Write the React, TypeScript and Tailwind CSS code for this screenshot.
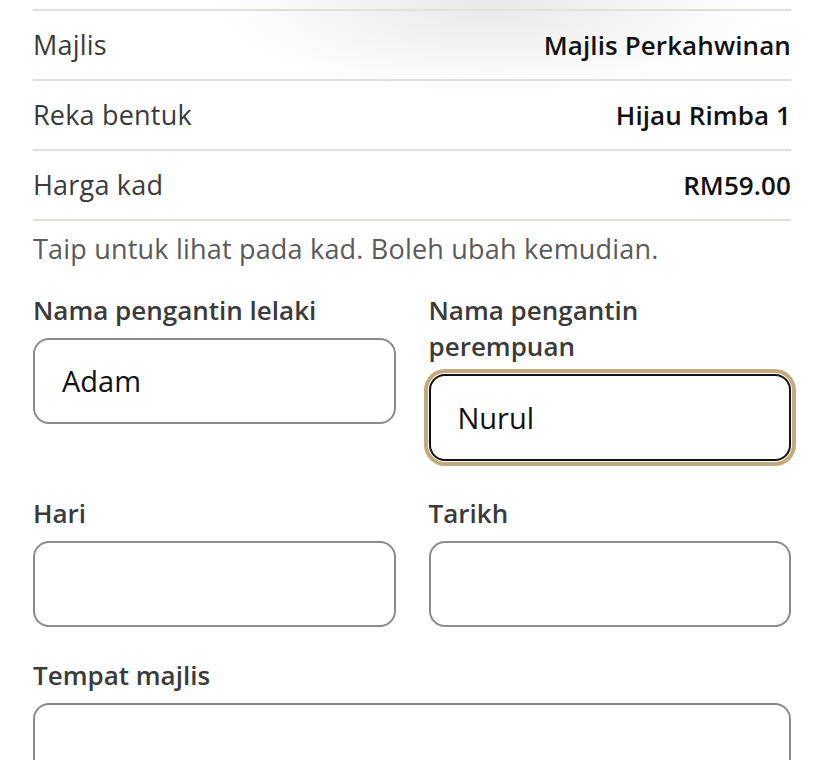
const summary = [
  { label: "Majlis", value: "Majlis Perkahwinan" },
  { label: "Reka bentuk", value: "Hijau Rimba 1" },
  { label: "Harga kad", value: "RM59.00" },
];

function Field({
  label,
  value,
  focused,
  full,
}: {
  label: string;
  value?: string;
  focused?: boolean;
  full?: boolean;
}) {
  return (
    <div className={full ? "col-span-2" : ""}>
      <p className="max-w-[330px] text-[26px] font-semibold leading-[36px] text-[#3a3a3a]">
        {label}
      </p>
      <div
        className={
          focused
            ? "mt-[10px] flex h-[87px] items-center rounded-[16px] border-2 border-[#111] px-[27px] shadow-[0_0_0_1px_#fff,0_0_0_5px_#c3aa7d]"
            : "mt-[10px] flex h-[86px] items-center rounded-[16px] border-2 border-[#8a8a8a] px-[27px]"
        }
      >
        <span className="text-[29px] text-[#111]">{value}</span>
      </div>
    </div>
  );
}

export default function App() {
  return (
    <div
      className="min-h-[760px] bg-white bg-[radial-gradient(ellipse_280px_95px_at_490px_0px,#e8e8e8,#ffffff)] px-[33px] pt-[9px]"
      style={{ fontFamily: '"Open Sans", "Noto Sans", sans-serif' }}
    >
      <div className="border-b-2 border-[#e2e0da]">
        {summary.map((row) => (
          <div
            key={row.label}
            className="flex h-[70px] items-center justify-between border-t-2 border-[#e2e0da]"
          >
            <span className="text-[27px] tracking-[0.2px] text-[#3a3a3a]">{row.label}</span>
            <span className="text-[26px] font-semibold tracking-[0.1px] text-[#111]">
              {row.value}
            </span>
          </div>
        ))}
      </div>
      <p className="mt-[10px] text-[27px] leading-[36px] tracking-[0.2px] text-[#5a5a5a]">
        Taip untuk lihat pada kad. Boleh ubah kemudian.
      </p>
      <div className="mt-[25px] grid grid-cols-2 gap-x-[33px]">
        <Field label="Nama pengantin lelaki" value="Adam" />
        <Field label="Nama pengantin perempuan" value="Nurul" focused />
      </div>
      <div className="mt-[34px] grid grid-cols-2 gap-x-[33px]">
        <Field label="Hari" />
        <Field label="Tarikh" />
      </div>
      <div className="mt-[30px] grid grid-cols-2 gap-x-[33px]">
        <Field label="Tempat majlis" full />
      </div>
    </div>
  );
}
